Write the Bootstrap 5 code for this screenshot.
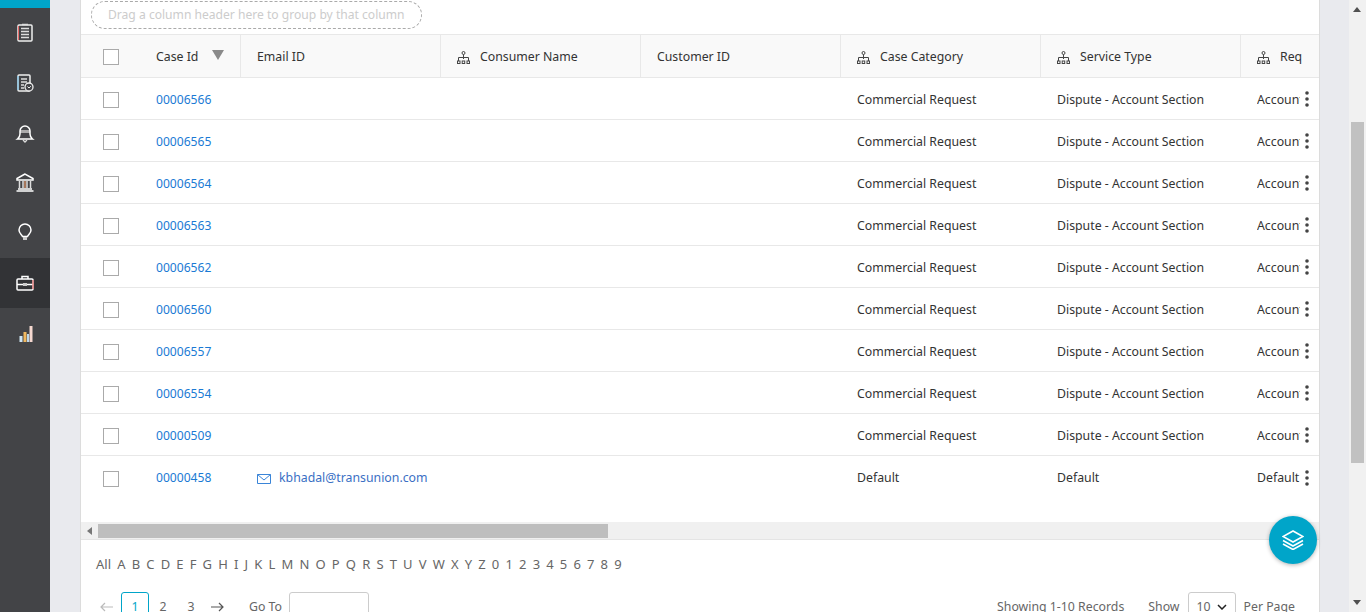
<!DOCTYPE html>
<html lang="en">
<head>
    <meta charset="UTF-8">
    <meta name="viewport" content="width=device-width, initial-scale=1.0">
    <title>Cases</title>
    <link href="https://cdn.jsdelivr.net/npm/bootstrap@5.3.0/dist/css/bootstrap.min.css" rel="stylesheet">
    <style>
        html, body { height: 612px; overflow: hidden; }
        body { font-family: "Noto Sans", "Liberation Sans", sans-serif; font-size: 12.3px; color: #333; background: #e9eaee; }
        .app-shell { height: 612px; }
        .side-rail { width: 50px; background: #434447; }
        .rail-top { height: 8px; background: #00a5c9; }
        .rail-link { height: 50px; color: #fff; }
        .rail-link.is-active { background: #323336; }
        .main-area { padding: 0 29px 0 30px; min-width: 0; }
        .panel-box { background: #fff; border-left: 1px solid #dcdcdc; border-right: 1px solid #dcdcdc; height: 612px; overflow: hidden; }
        .group-bar { height: 34px; padding: 1px 0 0 10px; }
        .group-pill { width: 331px; height: 28px; border: 1px dashed #aaa; border-radius: 14px; color: #ccc; font-size: 12.1px; padding-left: 16px; line-height: 26px; white-space: nowrap; }
        .grid-wrap { height: 488px; overflow: hidden; }
        .case-grid { table-layout: fixed; width: 1400px; border-collapse: separate; border-spacing: 0; }
        .case-grid th { height: 44px; background: #f9f9f9; font-weight: 400; color: #333; padding: 2px 0 0 16px; border-top: 1px solid #e8e8e8; border-bottom: 1px solid #e8e8e8; border-right: 1px solid #e8e8e8; white-space: nowrap; }
        .case-grid td { height: 42px; padding: 3px 0 0 16px; border-bottom: 1px solid #e8e8e8; white-space: nowrap; overflow: hidden; color: #333; }
        .case-grid tr:last-child td { border-bottom: 0; }
        .case-grid th.no-line { border-right: 0; }
        .tick-box { width: 16px; height: 16px; border: 1px solid #aaa; background: #fff; display: block; margin-left: 6px; }
        .case-link { color: #1a7ad4; text-decoration: none; font-size: 12.1px; }
        .mail-link { color: #3a6fc4; text-decoration: none; }
        .head-icon { margin-right: 10px; }
        .mail-icon { margin-right: 8px; }
        .sort-mark { width: 0; height: 0; border-left: 6px solid transparent; border-right: 6px solid transparent; border-top: 10px solid #8a8a8a; position: absolute; right: 16px; top: 15px; }
        .sort-cell { position: relative; }
        .req-clip { width: 43px; overflow: hidden; display: block; }
        .kebab-gap { margin: -2px 0 0 5px; }
        .h-scroll { height: 18px; background: #f0f0f0; border-bottom: 1px solid #e4e4e4; }
        .h-arrow { width: 17px; }
        .h-thumb { width: 510px; background: #bebebe; height: 14px; margin-top: 2px; }
        .alpha-row { padding: 15px 0 0 15px; color: #666; height: 46px; gap: 6.17px; font-size: 13px; }
        .pager-row { padding: 6px 24px 0 19px; color: #666; }
        .page-cur { width: 28px; height: 30px; border: 1px solid #00a5c9; border-radius: 3px; color: #00a5c9; }
        .page-num { width: 28px; height: 30px; }
        .next-arrow { margin-left: 5px; }
        .goto-label { margin-left: 25px; }
        .goto-box { width: 80px; height: 30px; border: 1px solid #ccc; border-radius: 3px; margin-left: 7px; }
        .show-select { width: 48px; height: 30px; border: 1px solid #ccc; border-radius: 3px; margin: 0 8px; padding: 0 8px; }
        .fab-btn { position: absolute; left: 1269px; top: 516px; width: 48px; height: 48px; border-radius: 50%; background: #00a5c9; border: 0; box-shadow: 0 1px 4px rgba(0,0,0,.3); }
        .v-scroll { width: 17px; background: #f1f1f1; position: relative; }
        .v-arrow-up { position: absolute; top: 7px; left: 4px; border-left: 4px solid transparent; border-right: 4px solid transparent; border-bottom: 5px solid #505050; }
        .v-arrow-down { position: absolute; bottom: 7px; left: 4px; border-left: 4px solid transparent; border-right: 4px solid transparent; border-top: 5px solid #505050; }
        .v-thumb { position: absolute; top: 122px; left: 2px; width: 13px; height: 341px; background: #c1c1c1; }
    </style>
</head>
<body>
    <div class="app-shell d-flex">
        <div class="side-rail flex-shrink-0">
            <div class="rail-top"></div>
            <div id="rail"></div>
        </div>
        <div class="main-area flex-grow-1">
            <div class="panel-box">
                <div class="group-bar">
                    <div class="group-pill">Drag a column header here to group by that column</div>
                </div>
                <div class="grid-wrap">
                    <table class="case-grid">
                        <colgroup>
                            <col style="width:59px"><col style="width:101px"><col style="width:200px"><col style="width:200px"><col style="width:200px"><col style="width:200px"><col style="width:200px"><col style="width:240px">
                        </colgroup>
                        <thead>
                            <tr id="head-row"></tr>
                        </thead>
                        <tbody id="case-rows"></tbody>
                    </table>
                </div>
                <div class="h-scroll d-flex">
                    <div class="h-arrow d-flex align-items-center justify-content-center">
                        <svg width="5" height="8" viewBox="0 0 5 8"><path d="M5 0v8L0 4z" fill="#777"/></svg>
                    </div>
                    <div class="h-thumb"></div>
                </div>
                <div class="alpha-row d-flex" id="alpha"></div>
                <div class="pager-row d-flex align-items-center">
                    <svg width="13" height="10" viewBox="0 0 13 10" class="me-2"><path d="M13 5H1M5 1 1 5l4 4" fill="none" stroke="#bbb" stroke-width="1.2"/></svg>
                    <div class="page-cur d-flex align-items-center justify-content-center">1</div>
                    <div class="page-num d-flex align-items-center justify-content-center">2</div>
                    <div class="page-num d-flex align-items-center justify-content-center">3</div>
                    <svg width="14" height="10" viewBox="0 0 14 10" class="next-arrow"><path d="M1 5h12M9 1l4 4-4 4" fill="none" stroke="#555" stroke-width="1.2"/></svg>
                    <span class="goto-label">Go To</span>
                    <div class="goto-box"></div>
                    <span class="ms-auto">Showing 1-10 Records</span>
                    <span class="ms-4">Show</span>
                    <div class="show-select d-flex align-items-center justify-content-between">10
                        <svg width="10" height="6" viewBox="0 0 10 6"><path d="M1 1l4 4 4-4" fill="none" stroke="#222" stroke-width="1.5"/></svg>
                    </div>
                    <span>Per Page</span>
                </div>
            </div>
        </div>
        <div class="v-scroll flex-shrink-0">
            <div class="v-arrow-up"></div>
            <div class="v-thumb"></div>
            <div class="v-arrow-down"></div>
        </div>
    </div>
    <button class="fab-btn d-flex align-items-center justify-content-center" type="button" aria-label="Layers">
        <svg width="22" height="20" viewBox="0 0 22 20"><path d="M11 1 1 6.500 11 12l10-5.500z" fill="none" stroke="#fff" stroke-width="1.6"/><path d="M1 10.500 11 16l10-5.500M1 14l10 5.500L21 14" fill="none" stroke="#fff" stroke-width="1.6"/></svg>
    </button>

    <script src="https://cdn.jsdelivr.net/npm/bootstrap@5.3.0/dist/js/bootstrap.bundle.min.js"></script>
    <script>
        const tree = `<svg class="head-icon" width="13" height="13" viewBox="0 0 13 13"><g fill="none" stroke="#444"><circle cx="6.500" cy="2" r="1.500"/><path d="M6.500 3.500V8M1.500 10V6.500h10V10"/><rect x=".5" y="10" width="2.500" height="2.500"/><rect x="5.200" y="10" width="2.500" height="2.500"/><rect x="10" y="10" width="2.500" height="2.500"/></g></svg>`;
        const icons = [
            `<rect x="3" y="2" width="14" height="16" rx="1" fill="none" stroke="#eee" stroke-width="1.500"/><path d="M3.500 3v14" stroke="#e86a6a"/><path d="M6 5.500h8M6 8.500h8M6 11.500h8M6 14.500h8" stroke="#ddd" stroke-width="1.500"/><path d="M7 1.500h6" stroke="#ddd" stroke-width="1.500"/>`,
            `<rect x="3" y="2" width="12" height="16" rx="1" fill="none" stroke="#eee" stroke-width="1.500"/><path d="M3 3v14" stroke="#6ac0ee"/><path d="M6 6h6M6 9h6M6 12h3M6 15h3" stroke="#ddd" stroke-width="1.300"/><circle cx="14" cy="14" r="4" fill="#434447" stroke="#eee" stroke-width="1.300"/><path d="M12.500 13.500 14 15l1.800-1.800" fill="none" stroke="#eee"/>`,
            `<path d="M5 8.500h10" stroke="#aaa" stroke-width="3"/><path d="M2.500 16c2-1.500 2.500-3 2.500-5V8a5 5 0 0 1 10 0v3c0 2 .5 3.500 2.500 5z" fill="none" stroke="#fff" stroke-width="1.500"/><path d="M8 17l2 2 2-2" fill="none" stroke="#ddd" stroke-width="1.300"/>`,
            `<path d="M10 1 2 5.500V7h16V5.500zM1.500 18h17M3 16h14" fill="none" stroke="#fff" stroke-width="1.500"/><path d="M4.500 8v7M8 8v7M12 8v7M15.500 8v7" stroke="#ddd" stroke-width="1.500"/><path d="M10 8v7" stroke="#e89a6a" stroke-width="1.200"/>`,
            `<path d="M7.500 13.500C6.800 11.500 4 10.500 4 7a6 6 0 0 1 12 0c0 3.500-2.800 4.500-3.500 6.500z" fill="none" stroke="#fff" stroke-width="1.500"/><path d="M8 15.500h4" stroke="#ccc" stroke-width="3"/>`,
            `<rect x="2" y="6" width="16" height="11" rx="1" fill="none" stroke="#fff" stroke-width="1.500"/><path d="M7 6V3.500h6V6M2 11.500h16" fill="none" stroke="#fff" stroke-width="1.500"/><rect x="8" y="10" width="4" height="3" fill="#ccc"/><path d="M18 7v9" stroke="#e05050"/>`,
            `<path d="M6 19v-6" stroke="#cfe6f5" stroke-width="3"/><path d="M10 19V9" stroke="#f0b860" stroke-width="3"/><path d="M13 19v-8" stroke="#bcd8ec" stroke-width="2"/><path d="M16 19V3" stroke="#f5d8d0" stroke-width="3"/>`
        ];
        document.getElementById("rail").innerHTML = icons.map((icon, i) => `
            <div class="rail-link d-flex align-items-center justify-content-center ${i === 5 ? "is-active" : ""}">
                <svg width="20" height="20" viewBox="0 0 20 20">${icon}</svg>
            </div>`).join('');

        const heads = [
            ['<span class="tick-box"></span>', false],
            ['Case Id<span class="sort-mark"></span>', false],
            ['Email ID', false],
            ['Consumer Name', true],
            ['Customer ID', false],
            ['Case Category', true],
            ['Service Type', true],
            ['Req', true]
        ];
        document.getElementById("head-row").innerHTML = heads.map((h, i) =>
            `<th class="${i === 0 ? "no-line" : ""} ${i === 1 ? "sort-cell" : ""}">${h[1] ? tree : ""}${h[0]}</th>`).join('');

        const cases = ["00006566", "00006565", "00006564", "00006563", "00006562", "00006560", "00006557", "00006554", "00000509", "00000458"];
        const mail = `<a class="mail-link" href="#"><svg class="mail-icon" width="14" height="10" viewBox="0 0 14 10"><path d="M.5.5h13v9H.5zM.5.5 7 6l6.500-5.500" fill="none" stroke="#3a85d8"/></svg>kbhadal@transunion.com</a>`;
        const kebab = `<svg class="kebab-gap flex-shrink-0" width="4" height="16" viewBox="0 0 4 16"><circle cx="2" cy="2" r="1.800" fill="#444"/><circle cx="2" cy="8" r="1.800" fill="#444"/><circle cx="2" cy="14" r="1.800" fill="#444"/></svg>`;
        document.getElementById("case-rows").innerHTML = cases.map((id, i) => {
            const last = i === cases.length - 1;
            return `<tr>
                <td><span class="tick-box"></span></td>
                <td><a class="case-link" href="#">${id}</a></td>
                <td>${last ? mail : ""}</td>
                <td></td>
                <td></td>
                <td>${last ? "Default" : "Commercial Request"}</td>
                <td>${last ? "Default" : "Dispute - Account Section"}</td>
                <td><div class="d-flex align-items-center"><span class="req-clip">${last ? "Default" : "Account Section"}</span>${kebab}</div></td>
            </tr>`;
        }).join('');

        const letters = ["All"].concat("ABCDEFGHIJKLMNOPQRSTUVWXYZ0123456789".split(""));
        document.getElementById("alpha").innerHTML = letters.map(l => `<span>${l}</span>`).join('');
    </script>
</body>
</html>
